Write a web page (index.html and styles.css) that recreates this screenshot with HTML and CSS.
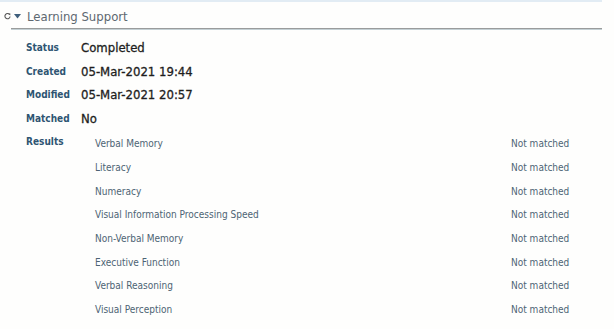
FILE: index.html
```html
<!DOCTYPE html>
<html lang="en">
<head>
    <meta charset="UTF-8">
    <title>Learning Support</title>
    <link rel="stylesheet" href="styles.css">
</head>
<body>
    <div class="panel">
        <div class="panel-header">
            <svg class="refresh" width="7" height="7" viewBox="0 0 7 7">
                <path d="M5.6 1.6 A2.6 2.6 0 1 0 6.1 3.5" fill="none" stroke="#555" stroke-width="1.1"/>
                <path d="M4.4 0.4 L6.4 0.6 L6.2 2.6 Z" fill="#555"/>
            </svg>
            <svg class="caret" width="7" height="5" viewBox="0 0 7 5">
                <path d="M0 0 L7 0 L3.5 4.5 Z" fill="#3f5f7c"/>
            </svg>
            <h2>Learning Support</h2>
        </div>
        <div class="rule"></div>

        <div class="details">
            <div class="label">Status</div>
            <div class="value">Completed</div>

            <div class="label">Created</div>
            <div class="value">05-Mar-2021 19:44</div>

            <div class="label">Modified</div>
            <div class="value">05-Mar-2021 20:57</div>

            <div class="label">Matched</div>
            <div class="value">No</div>

            <div class="label">Results</div>
            <div class="results">
                <div class="result"><span>Verbal Memory</span><span>Not matched</span></div>
                <div class="result"><span>Literacy</span><span>Not matched</span></div>
                <div class="result"><span>Numeracy</span><span>Not matched</span></div>
                <div class="result"><span>Visual Information Processing Speed</span><span>Not matched</span></div>
                <div class="result"><span>Non-Verbal Memory</span><span>Not matched</span></div>
                <div class="result"><span>Executive Function</span><span>Not matched</span></div>
                <div class="result"><span>Verbal Reasoning</span><span>Not matched</span></div>
                <div class="result"><span>Visual Perception</span><span>Not matched</span></div>
            </div>
        </div>
    </div>
</body>
</html>
```

FILE: styles.css
```css
body {
    margin: 0;
    padding: 0;
    background-color: #fefefd;
    font-family: "DejaVu Sans Condensed", "DejaVu Sans", sans-serif;
}

.panel {
    width: 602px;
    border-top: 2px solid #e2ecf4;
}

.panel-header {
    display: flex;
    align-items: center;
    height: 24px;
    padding: 2px 0 0 4px;
}

.refresh {
    margin-right: 3px;
}

.caret {
    margin-right: 6px;
}

.panel-header h2 {
    margin: 0;
    font-size: 13px;
    font-weight: normal;
    color: #5d6870;
}

.rule {
    margin-left: 11px;
    border-top: 1px solid #9a9c9c;
    border-bottom: 1px solid #c4d0d4;
}

.details {
    display: grid;
    grid-template-columns: 55px 1fr;
    grid-auto-rows: 23.5px;
    align-items: center;
    padding: 6px 31px 0 26px;
}

.label {
    font-size: 10px;
    font-weight: bold;
    color: #2e5572;
}

.value {
    font-size: 13px;
    color: #1e1e1e;
    -webkit-text-stroke: 0.3px #1e1e1e;
}

.results {
    grid-row: span 8;
    align-self: start;
    padding: 2px 0 0 14px;
}

.result {
    display: flex;
    justify-content: space-between;
    height: 23.7px;
    align-items: center;
    font-size: 10px;
    color: #4d6474;
    white-space: nowrap;
}

.result span:last-child {
    width: 60px;
}
```
